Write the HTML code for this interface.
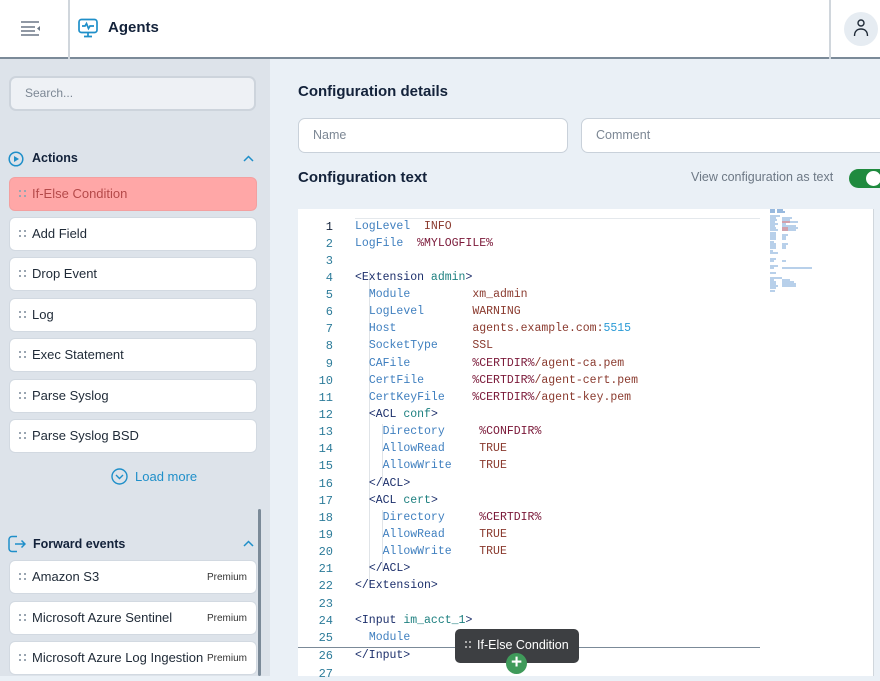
<!DOCTYPE html>
<html><head><meta charset="utf-8"><style>
*{box-sizing:border-box;margin:0;padding:0}
body{width:880px;height:676px;overflow:hidden;font-family:"Liberation Sans",sans-serif;background:#eaf0f6;position:relative}
.a{position:absolute}
.hdr{left:0;top:0;width:880px;height:59px;background:#fff;border-bottom:2px solid #7b8a98}
.side{left:0;top:59px;width:270px;height:617px;background:#dde3ea}
.item{position:absolute;left:9px;width:248px;height:34px;background:#fff;border-radius:6px;border:1px solid #d2d9e1;font-size:13px;color:#1f2a37;line-height:32px;padding-left:22px}
.item:before{content:"";position:absolute;left:9px;top:12px;width:2px;height:2px;background:#9aa5b1;box-shadow:5px 0 #9aa5b1,0 5px #9aa5b1,5px 5px #9aa5b1}
.prem{position:absolute;right:9px;top:10px;font-size:10px;line-height:14px;color:#333}
.code{left:298px;top:209px;width:576px;height:467px;background:#fff}
.ln{position:absolute;left:0;width:35px;text-align:right;font:12px "Liberation Mono",monospace;color:#2d7c9a}
.cl{position:absolute;left:57px;font:11.5px "Liberation Mono",monospace;white-space:pre;color:#3a7cb5}
.k{color:#3f7fbf}.v{color:#8a3a2e}.p{color:#7a1838}.t{color:#1c2f6b}.n{color:#1e8080}.num{color:#2a9ad6}
</style></head><body>
<div class="a hdr"></div>
<div class="a" style="left:68px;top:0;width:2px;height:59px;background:#d0d6dc"></div>
<div class="a" style="left:829px;top:0;width:2px;height:59px;background:#d0d6dc"></div>
<svg class="a" style="left:20px;top:20px" width="22" height="16" viewBox="0 0 22 16"><g stroke="#6b7785" stroke-width="1.6"><path d="M1 2h18M1 7h14M1 11h14M1 15h18"/></g><path d="M20 6v5l-3-2.5z" fill="#6b7785"/></svg>
<svg class="a" style="left:78px;top:18px" width="20" height="20" viewBox="0 0 20 20" fill="none" stroke="#1f8fc9" stroke-width="1.7"><rect x="1" y="1.5" width="18" height="13" rx="2.5"/><path d="M4 8h3l1.5-2.5 2 5 1.5-2.5h4M6 18.5h8M10 14.5v4"/></svg>
<div class="a" style="left:108px;top:19px;font-size:15px;font-weight:bold;color:#13223a">Agents</div>
<div class="a" style="left:844px;top:12px;width:34px;height:34px;border-radius:50%;background:#e6ecf2"></div>
<svg class="a" style="left:851px;top:18px" width="20" height="20" viewBox="0 0 20 20" fill="none" stroke="#1f2a37" stroke-width="1.4"><circle cx="10" cy="5" r="3"/><path d="M3.5 18c0-5 3-7 6.5-7s6.5 2 6.5 7"/></svg>

<div class="a side"></div>
<div class="a" style="left:9px;top:76px;width:247px;height:35px;background:#eef1f5;border:2px solid #cdd4dc;border-radius:7px;font-size:12px;color:#7c8794;line-height:31px;padding-left:14px">Search...</div>
<svg class="a" style="left:8px;top:151px" width="16" height="16" viewBox="0 0 16 16"><circle cx="8" cy="8" r="6.8" fill="none" stroke="#1f8fc9" stroke-width="1.5"/><path d="M6 5v6l5-3z" fill="#1f8fc9"/></svg>
<div class="a" style="left:32px;top:151px;font-size:12.5px;font-weight:bold;color:#13223a">Actions</div>
<svg class="a" style="left:243px;top:155px" width="11" height="7"><path d="M1 6l4.5-4.5L10 6" fill="none" stroke="#1f8fc9" stroke-width="1.5"/></svg>
<div class="item" style="top:177px;background:#ffa7a7;border-color:#f3a0a0;color:#b54a4a">If-Else Condition</div>
<div class="item" style="top:217px">Add Field</div>
<div class="item" style="top:257px">Drop Event</div>
<div class="item" style="top:298px">Log</div>
<div class="item" style="top:338px">Exec Statement</div>
<div class="item" style="top:379px">Parse Syslog</div>
<div class="item" style="top:419px">Parse Syslog BSD</div>
<svg class="a" style="left:111px;top:468px" width="17" height="17" viewBox="0 0 17 17" fill="none" stroke="#1f8fc9" stroke-width="1.4"><circle cx="8.5" cy="8.5" r="7.5"/><path d="M5 7l3.5 3.5L12 7"/></svg>
<div class="a" style="left:135px;top:469px;font-size:13px;color:#1f8fc9">Load more</div>
<div class="a" style="left:258px;top:509px;width:3px;height:167px;background:#7b8a98;border-radius:2px"></div>
<svg class="a" style="left:8px;top:535px" width="18" height="18" viewBox="0 0 18 18" fill="none" stroke="#1f8fc9" stroke-width="1.5"><path d="M9 1.5H4a3 3 0 0 0-3 3v9a3 3 0 0 0 3 3h5M7 9h10M13.5 5.5L17 9l-3.5 3.5"/></svg>
<div class="a" style="left:33px;top:537px;font-size:12.5px;font-weight:bold;color:#13223a">Forward events</div>
<svg class="a" style="left:243px;top:540px" width="11" height="7"><path d="M1 6l4.5-4.5L10 6" fill="none" stroke="#1f8fc9" stroke-width="1.5"/></svg>
<div class="item" style="top:560px">Amazon S3<span class="prem">Premium</span></div>
<div class="item" style="top:601px">Microsoft Azure Sentinel<span class="prem">Premium</span></div>
<div class="item" style="top:641px">Microsoft Azure Log Ingestion<span class="prem">Premium</span></div>

<div class="a" style="left:298px;top:83px;font-size:15px;font-weight:bold;color:#13223a">Configuration details</div>
<div class="a" style="left:298px;top:118px;width:270px;height:35px;background:#fff;border:1px solid #c9d1da;border-radius:7px;font-size:12.5px;color:#7c8794;line-height:33px;padding-left:14px">Name</div>
<div class="a" style="left:581px;top:118px;width:310px;height:35px;background:#fff;border:1px solid #c9d1da;border-radius:7px;font-size:12.5px;color:#7c8794;line-height:33px;padding-left:14px">Comment</div>
<div class="a" style="left:298px;top:169px;font-size:15px;font-weight:bold;color:#13223a">Configuration text</div>
<div class="a" style="left:691px;top:170px;font-size:12.5px;color:#6d7885">View configuration as text</div>
<div class="a" style="left:849px;top:169px;width:40px;height:19px;border-radius:10px;background:#1f8a3e"></div>
<div class="a" style="left:866px;top:171px;width:15px;height:15px;border-radius:50%;background:#fff"></div>

<div class="a code">
<div class="a" style="left:57px;top:9px;width:405px;height:18px;border-top:1px solid #e4e8ec"></div>
<div class="a" style="left:575px;top:0;width:1px;height:467px;background:#d0d6dc"></div>
<div class="a" style="left:71px;top:61px;width:1px;height:315px;background:#e0e4e8"></div>
<div class="a" style="left:84px;top:215px;width:1px;height:60px;background:#e0e4e8"></div>
<div class="a" style="left:84px;top:301px;width:1px;height:60px;background:#e0e4e8"></div>
<div class="a" style="left:0;top:438px;width:462px;height:1px;background:#7b8a98"></div>
<svg class="a" style="left:470px;top:0" width="60" height="92">
<g stroke-width="1.2">
<path d="M2 1h5M9 1h6M2 3h5M9 3h8" stroke="#5b8fc9"/>
<path d="M2 7h10M2 9h6M14 9h10M2 11h7M14 11h8M2 13h5M14 13h16M2 15h8M14 15h4M2 17h5M14 17h14M2 19h6M14 19h16M2 21h8M14 21h14M2 24h6M2 26h6M14 26h6M2 28h6M14 28h4M2 30h6M14 30h4M2 33h4M2 35h6M14 35h6M2 37h6M14 37h4M2 39h6M14 39h4M2 42h3M2 44h8M2 50h6M2 52h4M14 52h4M2 57h8M2 59h4M14 59h30M2 64h6M2 69h12M2 71h4M14 71h8M2 73h6M14 73h12M2 75h6M14 75h14M2 77h8M14 77h14M2 79h6M2 82h5" stroke="#8db3dd"/>
<path d="M14 13h8M14 19h6M14 21h6" stroke="#c9737e"/></g></svg>
<div class="ln" style="top:11px;color:#13223a">1</div><div class="cl" style="top:11px"><span class="k">LogLevel</span>  <span class="v">INFO</span></div>
<div class="ln" style="top:28px">2</div><div class="cl" style="top:28px"><span class="k">LogFile</span>  <span class="p">%MYLOGFILE%</span></div>
<div class="ln" style="top:45px">3</div>
<div class="ln" style="top:62px">4</div><div class="cl" style="top:62px"><span class="t">&lt;Extension</span> <span class="n">admin</span><span class="t">&gt;</span></div>
<div class="ln" style="top:79px">5</div><div class="cl" style="top:79px">  <span class="k">Module</span>         <span class="v">xm_admin</span></div>
<div class="ln" style="top:96px">6</div><div class="cl" style="top:96px">  <span class="k">LogLevel</span>       <span class="v">WARNING</span></div>
<div class="ln" style="top:113px">7</div><div class="cl" style="top:113px">  <span class="k">Host</span>           <span class="v">agents.example.com:</span><span class="num">5515</span></div>
<div class="ln" style="top:130px">8</div><div class="cl" style="top:130px">  <span class="k">SocketType</span>     <span class="v">SSL</span></div>
<div class="ln" style="top:148px">9</div><div class="cl" style="top:148px">  <span class="k">CAFile</span>         <span class="p">%CERTDIR%</span><span class="v">/agent-ca.pem</span></div>
<div class="ln" style="top:165px">10</div><div class="cl" style="top:165px">  <span class="k">CertFile</span>       <span class="p">%CERTDIR%</span><span class="v">/agent-cert.pem</span></div>
<div class="ln" style="top:182px">11</div><div class="cl" style="top:182px">  <span class="k">CertKeyFile</span>    <span class="p">%CERTDIR%</span><span class="v">/agent-key.pem</span></div>
<div class="ln" style="top:199px">12</div><div class="cl" style="top:199px">  <span class="t">&lt;ACL</span> <span class="n">conf</span><span class="t">&gt;</span></div>
<div class="ln" style="top:216px">13</div><div class="cl" style="top:216px">    <span class="k">Directory</span>     <span class="p">%CONFDIR%</span></div>
<div class="ln" style="top:233px">14</div><div class="cl" style="top:233px">    <span class="k">AllowRead</span>     <span class="v">TRUE</span></div>
<div class="ln" style="top:250px">15</div><div class="cl" style="top:250px">    <span class="k">AllowWrite</span>    <span class="v">TRUE</span></div>
<div class="ln" style="top:268px">16</div><div class="cl" style="top:268px">  <span class="t">&lt;/ACL&gt;</span></div>
<div class="ln" style="top:285px">17</div><div class="cl" style="top:285px">  <span class="t">&lt;ACL</span> <span class="n">cert</span><span class="t">&gt;</span></div>
<div class="ln" style="top:302px">18</div><div class="cl" style="top:302px">    <span class="k">Directory</span>     <span class="p">%CERTDIR%</span></div>
<div class="ln" style="top:319px">19</div><div class="cl" style="top:319px">    <span class="k">AllowRead</span>     <span class="v">TRUE</span></div>
<div class="ln" style="top:336px">20</div><div class="cl" style="top:336px">    <span class="k">AllowWrite</span>    <span class="v">TRUE</span></div>
<div class="ln" style="top:353px">21</div><div class="cl" style="top:353px">  <span class="t">&lt;/ACL&gt;</span></div>
<div class="ln" style="top:370px">22</div><div class="cl" style="top:370px"><span class="t">&lt;/Extension&gt;</span></div>
<div class="ln" style="top:388px">23</div>
<div class="ln" style="top:405px">24</div><div class="cl" style="top:405px"><span class="t">&lt;Input</span> <span class="n">im_acct_1</span><span class="t">&gt;</span></div>
<div class="ln" style="top:422px">25</div><div class="cl" style="top:422px">  <span class="k">Module</span>       <span class="v">im_acct</span></div>
<div class="ln" style="top:440px">26</div><div class="cl" style="top:440px"><span class="t">&lt;/Input&gt;</span></div>
<div class="ln" style="top:458px">27</div>
</div>
<div class="a" style="left:455px;top:629px;width:124px;height:34px;background:#3d3f42;border-radius:5px;color:#fff;font-size:12.5px;line-height:32px;padding-left:22px">If-Else Condition</div>
<div class="a" style="left:465px;top:641px;width:2px;height:2px;background:#aaa;box-shadow:4px 0 #aaa,0 5px #aaa,4px 5px #aaa"></div>
<div class="a" style="left:506px;top:653px;width:21px;height:21px;border-radius:50%;background:#3f9a5a;color:#fff;font-size:19px;line-height:20px;text-align:center;font-weight:bold">+</div>
</body></html>
